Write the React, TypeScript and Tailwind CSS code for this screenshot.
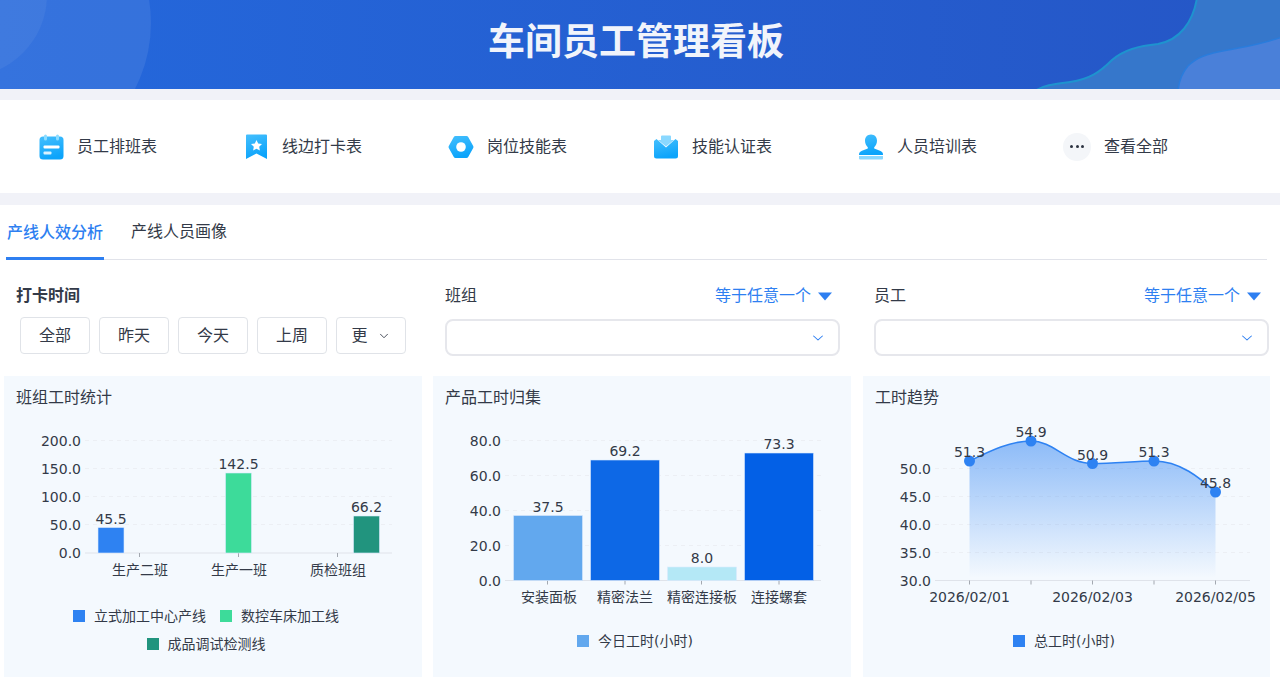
import { ReactNode } from "react";
import { ChevronDown } from "lucide-react";

const INK = "#333a48";

function IconFrame({ id, children }: { id: string; children: ReactNode }) {
  return (
    <svg width="26" height="26" viewBox="0 0 26 26" className="shrink-0">
      <defs>
        <linearGradient id={id} x1="0" y1="0" x2="0.3" y2="1">
          <stop offset="0" stopColor="#45bffd" />
          <stop offset="1" stopColor="#0ca4fb" />
        </linearGradient>
      </defs>
      {children}
    </svg>
  );
}

function CalendarIcon() {
  return (
    <IconFrame id="ic1">
      <rect x="1.5" y="2.5" width="24" height="23" rx="3.5" fill="url(#ic1)" />
      <rect x="6" y="0.5" width="3" height="6" rx="1.5" fill="#8cdcff" />
      <rect x="18" y="0.5" width="3" height="6" rx="1.5" fill="#8cdcff" />
      <rect x="5.5" y="11.5" width="16" height="3" rx="1" fill="#fff" />
      <rect x="5.5" y="17.5" width="8" height="3" rx="1" fill="#d8f2ff" />
    </IconFrame>
  );
}

function BookmarkIcon() {
  return (
    <IconFrame id="ic2">
      <path d="M3 1.5 a1 1 0 0 1 1-1 h19 a1 1 0 0 1 1 1 V25 l-10.500-5.500 L3 25 Z" fill="url(#ic2)" />
      <path d="M13.500 6 l1.700 3.500 3.800.5 -2.800 2.700 .7 3.800 -3.400-1.800 -3.400 1.800 .7-3.800 -2.800-2.700 3.800-.5 Z" fill="#fff" />
    </IconFrame>
  );
}

function HexIcon() {
  return (
    <IconFrame id="ic3">
      <path d="M7.500 2 h11 a2 2 0 0 1 1.700 1 l5 9 a2 2 0 0 1 0 2 l-5 9 a2 2 0 0 1-1.700 1 h-11 a2 2 0 0 1-1.700-1 l-5-9 a2 2 0 0 1 0-2 l5-9 a2 2 0 0 1 1.700-1 Z" fill="url(#ic3)" />
      <circle cx="13" cy="13" r="4.800" fill="#fff" />
    </IconFrame>
  );
}

function MailIcon() {
  return (
    <IconFrame id="ic4">
      <path d="M9 1.500 h8 a1 1 0 0 1 1 1 V6 h3 L13 12.500 5 6 h3 V2.500 a1 1 0 0 1 1-1 Z" fill="#8ad8ff" />
      <path d="M1 7 L3.500 5 13 13.500 22.500 5 25 7 V22 a2.500 2.500 0 0 1-2.500 2.500 h-19 A2.500 2.500 0 0 1 1 22 Z" fill="url(#ic4)" />
    </IconFrame>
  );
}

function PersonIcon() {
  return (
    <IconFrame id="ic5">
      <path d="M13 0.500 c3.800 0 6 2.800 6 6.300 0 2.700-1.300 5-2.800 6.400 v1.300 l5.800 2.300 c2 .8 3 2 3 3.700 V21 H1 v-.500 c0-1.700 1-2.900 3-3.700 l5.800-2.300 v-1.300 C8.300 11.800 7 9.500 7 6.800 7 3.300 9.200 0.500 13 0.500 Z" fill="url(#ic5)" />
      <path d="M1 22 h24 v2.500 a1 1 0 0 1-1 1 H2 a1 1 0 0 1-1-1 Z" fill="#8ad8ff" />
    </IconFrame>
  );
}

function MoreIcon() {
  return (
    <div className="flex h-7 w-7 shrink-0 items-center justify-center gap-[2.500px] rounded-full bg-[#f4f6f9]">
      <span className="h-[3px] w-[3px] rounded-full bg-[#2c3340]" />
      <span className="h-[3px] w-[3px] rounded-full bg-[#2c3340]" />
      <span className="h-[3px] w-[3px] rounded-full bg-[#2c3340]" />
    </div>
  );
}

const navItems = [
  { label: "员工排班表", icon: <CalendarIcon /> },
  { label: "线边打卡表", icon: <BookmarkIcon /> },
  { label: "岗位技能表", icon: <HexIcon /> },
  { label: "技能认证表", icon: <MailIcon /> },
  { label: "人员培训表", icon: <PersonIcon /> },
  { label: "查看全部", icon: <MoreIcon /> },
];

function Banner() {
  return (
    <header className="relative flex h-[89px] items-center justify-center overflow-hidden bg-gradient-to-r from-[#2468dc] to-[#2556c6] pr-[8px] pb-[4px]">
      <svg className="absolute inset-0 h-full w-full" viewBox="0 0 1280 89">
        <circle cx="7" cy="23" r="144" fill="#fff" fillOpacity="0.08" />
        <circle cx="-35" cy="-5" r="82" fill="#fff" fillOpacity="0.05" />
        <path d="M1197 -2 C1193 22 1180 40 1158 44 C1138 46 1124 50 1112 60 C1100 72 1090 79 1070 82 C1055 84 1044 85 1035 91 H1282 V-2 Z" fill="#3677cb" stroke="#1e93cf" strokeWidth="2" />
        <path d="M1282 37 C1262 44 1248 46 1228 50 C1205 54 1196 58 1188 66 C1182 73 1179 81 1178 91 H1282 Z" fill="#4a80d9" stroke="#2a7cdc" strokeWidth="1.500" />
      </svg>
      <h1 className="relative text-[37px] leading-none font-bold text-[#f1f4fb]">车间员工管理看板</h1>
    </header>
  );
}

function ShortcutBar() {
  return (
    <nav className="flex h-[93px] items-center bg-white pl-[38px]">
      {navItems.map((item) => (
        <div key={item.label} className="flex w-[205px] items-center gap-[13px] text-[16px] text-[#333a48]">
          {item.icon}
          <span>{item.label}</span>
        </div>
      ))}
    </nav>
  );
}

function Tabs() {
  return (
    <div className="ml-[6px] flex h-[55px] w-[1261px] items-end gap-[27px] border-b border-[#e1e3ea] text-[16px]">
      <div className="flex h-[52px] items-center border-b-[3px] border-[#2e7ff1] px-px font-medium text-[#2e7ff1] -mb-px">产线人效分析</div>
      <div className="flex h-[52px] items-center text-[#333a48] pb-[3px]">产线人员画像</div>
    </div>
  );
}

function QuickButton({ children }: { children: ReactNode }) {
  return (
    <button className="flex h-[37px] w-[70px] items-center justify-center gap-[9px] rounded-[4px] border border-[#e0e3e8] bg-white text-[16px] text-[#333a48]">
      {children}
    </button>
  );
}

function SelectField({ label }: { label: string }) {
  return (
    <div className="w-[395px]">
      <div className="flex h-[24px] items-center justify-between pr-[8px] text-[16px] text-[#333a48]">
        <span>{label}</span>
        <span className="flex items-center gap-[7px] text-[#2e7ff1]">
          等于任意一个
          <svg width="14" height="9" viewBox="0 0 14 9"><path d="M0 0.500 H14 L7 8.500 Z" fill="#2e7ff1" /></svg>
        </span>
      </div>
      <div className="mt-[11px] flex h-[37px] items-center justify-end rounded-[8px] border-2 border-[#e6e7ec] bg-white pr-[12px]">
        <ChevronDown size={16} strokeWidth={1.500} className="scale-x-110 text-[#2e7ff1]" />
      </div>
    </div>
  );
}

function Filters() {
  return (
    <div className="flex h-[116px] pt-[24px]">
      <div className="ml-[16px] w-[429px]">
        <div className="flex h-[24px] items-center text-[16px] font-semibold text-[#333a48]">打卡时间</div>
        <div className="mt-[9px] ml-[4px] flex gap-[9px]">
          <QuickButton>全部</QuickButton>
          <QuickButton>昨天</QuickButton>
          <QuickButton>今天</QuickButton>
          <QuickButton>上周</QuickButton>
          <QuickButton>
            更
            <ChevronDown size={14} strokeWidth={1.500} />
          </QuickButton>
        </div>
      </div>
      <SelectField label="班组" />
      <div className="w-[34px]" />
      <SelectField label="员工" />
    </div>
  );
}

function Card({ title, className, children }: { title: string; className: string; children: ReactNode }) {
  return (
    <section className={`h-[301px] shrink-0 bg-[#f4f9fe] ${className}`}>
      <h3 className="flex h-[44px] items-center pl-[12px] text-[16px] font-normal text-[#333a48]">{title}</h3>
      {children}
    </section>
  );
}

function Legend({ items, className }: { items: { color: string; label: string }[]; className: string }) {
  return (
    <div className={`flex h-[28px] items-center justify-center gap-[14px] text-[14px] text-[#333a48] ${className}`}>
      {items.map((item) => (
        <div key={item.label} className="flex items-center gap-[9px]">
          <span className="h-[12px] w-[12px]" style={{ backgroundColor: item.color }} />
          <span>{item.label}</span>
        </div>
      ))}
    </div>
  );
}

function Axis({ x1, x2, rows, ticks }: { x1: number; x2: number; rows: { y: number; label: string }[]; ticks: number[] }) {
  const base = rows[rows.length - 1].y;
  return (
    <g fontSize="14" fill={INK}>
      {rows.slice(0, -1).map((r) => (
        <line key={r.y} x1={x1} x2={x2} y1={r.y} y2={r.y} stroke="#eceff4" strokeDasharray="4 4" />
      ))}
      <line x1={x1} x2={x2} y1={base} y2={base} stroke="#dfe3ea" strokeWidth="1.200" />
      {ticks.map((t) => (
        <line key={t} x1={t} x2={t} y1={base} y2={base + 4} stroke="#a3a8b0" />
      ))}
      {rows.map((r) => (
        <text key={r.label} x={x1 - 4} y={r.y + 5} textAnchor="end">{r.label}</text>
      ))}
    </g>
  );
}

function Bar({ x, w, top, base, color, value }: { x: number; w: number; top: number; base: number; color: string; value: string }) {
  return (
    <g>
      <rect x={x} y={top} width={w} height={base - top} fill={color} stroke="#dbeafe" strokeWidth="0.600" />
      <text x={x + w / 2} y={top - 4} textAnchor="middle" fontSize="14" fill={INK}>{value}</text>
    </g>
  );
}

function TeamChart() {
  const base = 553;
  return (
    <svg className="block h-[182px] w-[418px]" viewBox="4 420 418 182">
      <Axis
        x1={85}
        x2={392}
        rows={[
          { y: 440.500, label: "200.0" },
          { y: 468.500, label: "150.0" },
          { y: 496.500, label: "100.0" },
          { y: 524.500, label: "50.0" },
          { y: base, label: "0.0" },
        ]}
        ticks={[139.500, 238.500, 337.500]}
      />
      <Bar x={98} w={26} top={527.500} base={base} color="#2e82f2" value="45.5" />
      <Bar x={225.500} w={26} top={473} base={base} color="#3ddb9a" value="142.5" />
      <Bar x={353.500} w={26} top={516} base={base} color="#21947e" value="66.2" />
      <g fontSize="14" fill={INK} textAnchor="middle">
        <text x="140" y="575">生产二班</text>
        <text x="239" y="575">生产一班</text>
        <text x="338" y="575">质检班组</text>
      </g>
    </svg>
  );
}

function ProductChart() {
  const base = 580.500;
  return (
    <svg className="block h-[207px] w-[418px]" viewBox="433 420 418 207">
      <Axis
        x1={505}
        x2={821}
        rows={[
          { y: 440.500, label: "80.0" },
          { y: 475.500, label: "60.0" },
          { y: 510.500, label: "40.0" },
          { y: 545.500, label: "20.0" },
          { y: base, label: "0.0" },
        ]}
        ticks={[547.500, 625, 701.500, 779]}
      />
      <Bar x={513.500} w={69} top={515.500} base={base} color="#62a8ee" value="37.5" />
      <Bar x={590.500} w={69} top={460} base={base} color="#0d68e6" value="69.2" />
      <Bar x={667.500} w={69} top={567} base={base} color="#b4e8f6" value="8.0" />
      <Bar x={744.500} w={69} top={453} base={base} color="#0360e6" value="73.3" />
      <g fontSize="14" fill={INK} textAnchor="middle">
        <text x="549" y="602">安装面板</text>
        <text x="625" y="602">精密法兰</text>
        <text x="702" y="602">精密连接板</text>
        <text x="779" y="602">连接螺套</text>
      </g>
    </svg>
  );
}

function TrendChart() {
  const points = [
    { x: 969.500, y: 461, v: "51.3" },
    { x: 1031, y: 441, v: "54.9" },
    { x: 1092.500, y: 463.500, v: "50.9" },
    { x: 1154, y: 461, v: "51.3" },
    { x: 1215.500, y: 492, v: "45.8" },
  ];
  const line =
    "M969.500 461 C990 451 1010 441 1031 441 C1054 441 1066 463.500 1092.500 463.500 C1115 463.500 1135 461 1154 461 C1180 461 1200 478 1215.500 492";
  return (
    <svg className="block h-[207px] w-[407px]" viewBox="863 420 407 207">
      <defs>
        <linearGradient id="trend" x1="0" y1="0" x2="0" y2="1">
          <stop offset="0" stopColor="#2e82f2" stopOpacity="0.52" />
          <stop offset="1" stopColor="#2e82f2" stopOpacity="0" />
        </linearGradient>
      </defs>
      <Axis
        x1={935}
        x2={1250}
        rows={[
          { y: 468.500, label: "50.0" },
          { y: 496.500, label: "45.0" },
          { y: 524.500, label: "40.0" },
          { y: 552.500, label: "35.0" },
          { y: 580.500, label: "30.0" },
        ]}
        ticks={points.map((p) => p.x)}
      />
      <path d={`${line} L1215.500 578 L969.500 578 Z`} fill="url(#trend)" />
      <path d={line} fill="none" stroke="#2e82f2" strokeWidth="1.500" />
      {points.map((p) => (
        <circle key={p.x} cx={p.x} cy={p.y} r="5.500" fill="#2e82f2" />
      ))}
      <g fontSize="14" fill={INK} textAnchor="middle">
        {points.map((p) => (
          <text key={p.x} x={p.x} y={p.y - 4}>{p.v}</text>
        ))}
        <text x="969.500" y="602">2026/02/01</text>
        <text x="1092.500" y="602">2026/02/03</text>
        <text x="1215.500" y="602">2026/02/05</text>
      </g>
    </svg>
  );
}

export default function App() {
  return (
    <div className="h-[692px] w-[1280px] overflow-hidden bg-white font-['DejaVu_Sans','Noto_Sans_CJK_SC',sans-serif]">
      <Banner />
      <div className="h-[11px] bg-[#f1f2f8]" />
      <ShortcutBar />
      <div className="h-[12px] bg-[#f1f2f8]" />
      <Tabs />
      <Filters />
      <div className="flex pl-[4px]">
        <Card title="班组工时统计" className="w-[418px]">
          <TeamChart />
          <Legend
            className="pr-[14px]"
            items={[
              { color: "#2e82f2", label: "立式加工中心产线" },
              { color: "#3ddb9a", label: "数控车床加工线" },
            ]}
          />
          <Legend className="pr-[14px]" items={[{ color: "#21947e", label: "成品调试检测线" }]} />
        </Card>
        <Card title="产品工时归集" className="ml-[11px] w-[418px]">
          <ProductChart />
          <Legend className="pr-[14px]" items={[{ color: "#62a8ee", label: "今日工时(小时)" }]} />
        </Card>
        <Card title="工时趋势" className="ml-[12px] w-[407px]">
          <TrendChart />
          <Legend className="pr-[5px]" items={[{ color: "#2e82f2", label: "总工时(小时)" }]} />
        </Card>
      </div>
    </div>
  );
}
